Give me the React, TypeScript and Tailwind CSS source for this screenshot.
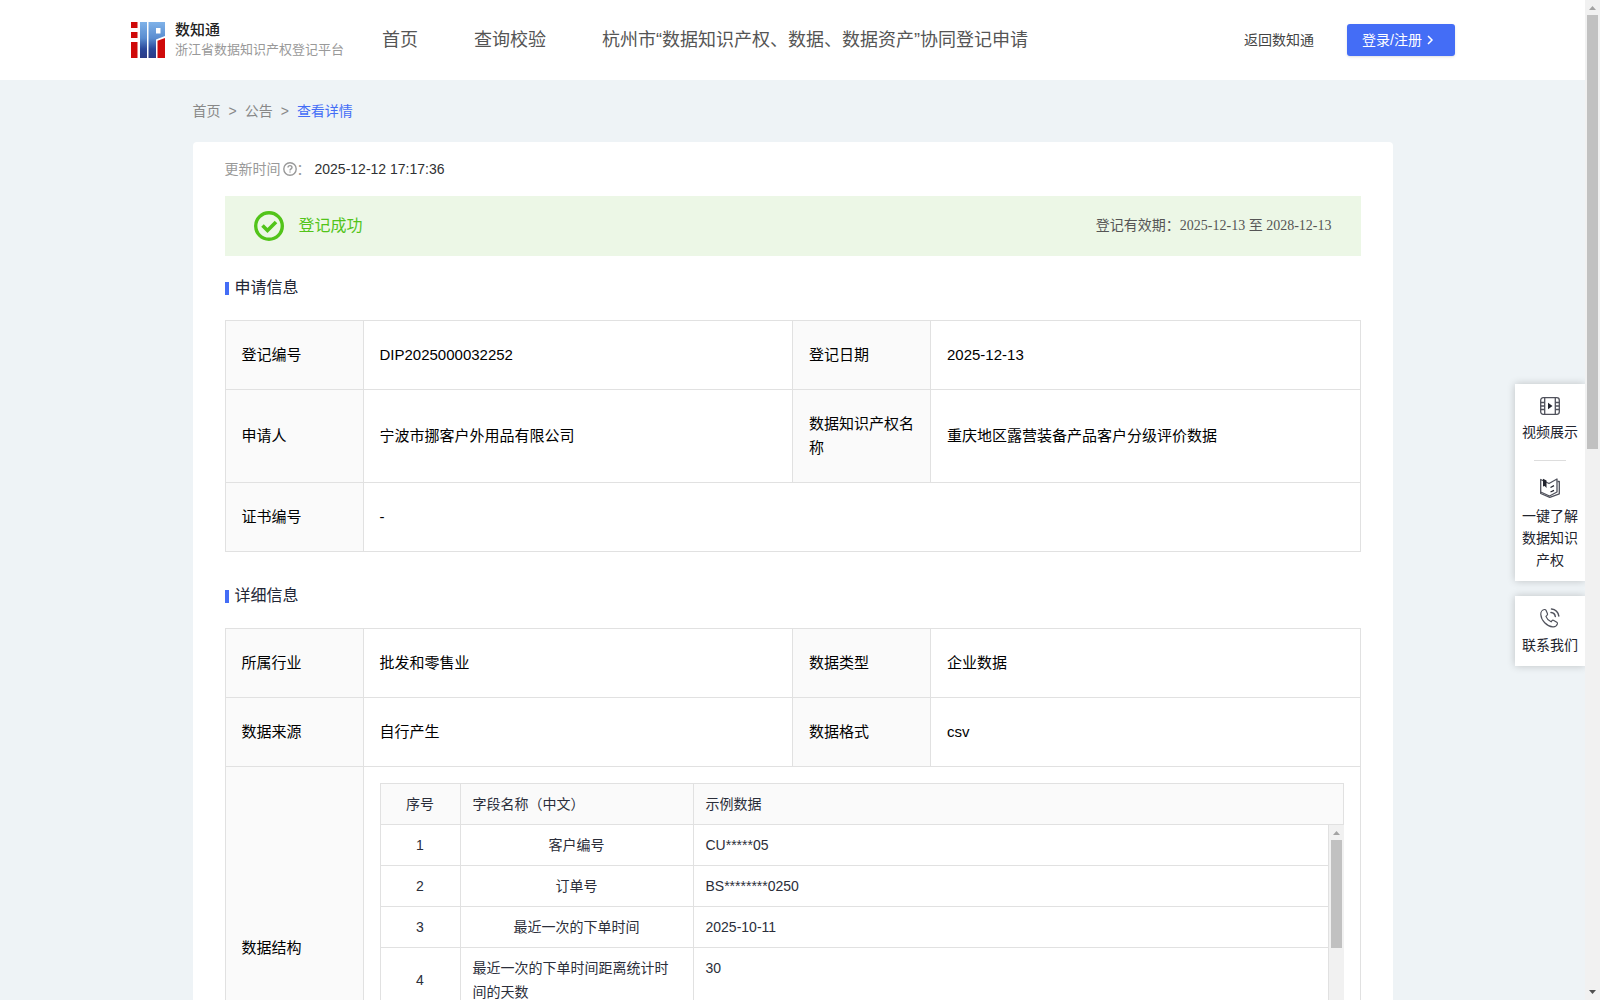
import type { ReactNode } from "react"

type Cell = { label: string; value: ReactNode }

const applyRows: Cell[][] = [
  [
    { label: "登记编号", value: "DIP2025000032252" },
    { label: "登记日期", value: "2025-12-13" },
  ],
  [
    { label: "申请人", value: "宁波市挪客户外用品有限公司" },
    { label: "数据知识产权名称", value: "重庆地区露营装备产品客户分级评价数据" },
  ],
  [{ label: "证书编号", value: "-" }],
]

const fields = [
  { name: "客户编号", sample: "CU*****05" },
  { name: "订单号", sample: "BS********0250" },
  { name: "最近一次的下单时间", sample: "2025-10-11" },
  { name: "最近一次的下单时间距离统计时间的天数", sample: "30" },
]

const detailRows: Cell[][] = [
  [
    { label: "所属行业", value: "批发和零售业" },
    { label: "数据类型", value: "企业数据" },
  ],
  [
    { label: "数据来源", value: "自行产生" },
    { label: "数据格式", value: "csv" },
  ],
]

function Logo() {
  return (
    <svg width="34" height="36" viewBox="0 0 34 36" aria-hidden="true">
      <defs>
        <linearGradient id="logoBlue" gradientUnits="userSpaceOnUse" x1="0" y1="0" x2="0" y2="36">
          <stop offset="0" stopColor="#7fb2e8" />
          <stop offset="0.45" stopColor="#5a8dd0" />
          <stop offset="0.75" stopColor="#2a489a" />
          <stop offset="1" stopColor="#2b3a86" />
        </linearGradient>
      </defs>
      <g fill="#cf0a0a">
        <path d="M0 0h6.500v6H0zM0 10h6.500v6H0zM0 20h6.500v16H0z" />
        <path d="M26.500 18.800L34 16v20h-7.500z" />
      </g>
      <path
        fill="url(#logoBlue)"
        fillRule="evenodd"
        d="M9 0h7v36H9zM17.500 0H34v14l-9 3.500V36h-7.500zM25 6v5.500h4.500V6z"
      />
    </svg>
  )
}

function VideoIcon() {
  return (
    <svg width="20" height="18" viewBox="0 0 20 18" fill="none" stroke="#50525c" strokeWidth="1.300" aria-hidden="true">
      <rect x="0.700" y="0.700" width="18.600" height="16.600" rx="2.500" />
      <path d="M4.700 0.600v16.800M15.300 0.600v16.800M0.600 5.500h4M0.600 9h4M0.600 12.500h4M15.300 5.500h4M15.300 9h4M15.300 12.500h4" />
      <path d="M8 5.800l4.500 3.200L8 12.200z" fill="#22242e" stroke="none" />
    </svg>
  )
}

function BookIcon() {
  return (
    <svg width="20" height="20" viewBox="0 0 20 20" fill="none" stroke="#50525c" strokeWidth="1.300" strokeLinejoin="round" aria-hidden="true">
      <path d="M0.700 1.500L9 5.500 17 1v13L9.500 18 0.700 14z" />
      <path d="M17.500 3.500h1.800v12.300L9.800 19.300 0.700 15.500V14" />
      <path d="M10.500 9.500L14 7.700M10.500 14L14 12.300" stroke="#22242e" />
      <path d="M3 0.800l3.500 1.800v7.400L4.700 8 3 8.500z" fill="#22242e" stroke="none" />
    </svg>
  )
}

function PhoneIcon() {
  return (
    <svg width="20" height="20" viewBox="0 0 20 20" fill="none" stroke="#50525c" strokeWidth="1.200" strokeLinejoin="round" strokeLinecap="round" aria-hidden="true">
      <path d="M4.500 1.500C2.500 1.800.6 3.800.8 6.500c.4 6 6 11.800 12 12.400 2.200.2 4-1.200 4.600-3 .2-.7 0-1.200-.6-1.600l-3-1.900c-.7-.4-1.300-.3-1.800.3l-.9 1.100c-2.400-1-4.300-3-5.200-5.400l1.100-1c.6-.5.7-1.100.4-1.800L6 2.300c-.3-.6-.8-.9-1.500-.8z" />
      <path d="M11 4.500c2.300.2 4 1.800 4.300 4M11.500 1c3.900.3 7 3.200 7.300 7" strokeWidth="1.500" />
    </svg>
  )
}

function Header() {
  return (
    <header className="flex h-20 shrink-0 items-center justify-between bg-white px-[130px]">
      <div className="flex items-center">
        <a href="#" className="flex w-[252px] items-center gap-[10px] pl-px">
          <Logo />
          <span className="flex flex-col">
            <span className="text-[15px] leading-5 font-medium text-[#222]">数知通</span>
            <span className="text-[13px] leading-5 whitespace-nowrap text-[#999]">浙江省数据知识产权登记平台</span>
          </span>
        </a>
        <nav className="flex gap-14 text-lg leading-6 whitespace-nowrap text-[#555]">
          <a href="#">首页</a>
          <a href="#">查询校验</a>
          <a href="#">杭州市“数据知识产权、数据、数据资产”协同登记申请</a>
        </nav>
      </div>
      <div className="flex items-center gap-[33px] text-sm whitespace-nowrap">
        <a href="#" className="text-[#444]">返回数知通</a>
        <button className="flex h-8 w-[108px] items-center gap-1 rounded-[3px] bg-[#446df6] px-[15px] text-white shadow-sm">
          登录/注册
          <svg width="8" height="10" viewBox="0 0 8 10" fill="none" stroke="#fff" strokeWidth="1.500" aria-hidden="true">
            <path d="M2 1l4 4-4 4" />
          </svg>
        </button>
      </div>
    </header>
  )
}

function SectionTitle({ children }: { children: ReactNode }) {
  return (
    <h2 className="flex items-center gap-[6px] text-base leading-6 text-[#222636]">
      <span className="h-[13px] w-1 bg-[#446df6]" />
      {children}
    </h2>
  )
}

function InfoTable({ rows, children }: { rows: Cell[][]; children?: ReactNode }) {
  return (
    <table className="w-full table-fixed border-collapse text-[15px] leading-6 text-black">
      <colgroup>
        <col className="w-[138px]" />
        <col />
        <col className="w-[138px]" />
        <col />
      </colgroup>
      <tbody>
        {rows.map((row) => (
          <tr key={row[0].label}>
            {row.map((cell) => (
              <InfoCell key={cell.label} cell={cell} span={row.length === 1 ? 3 : 1} />
            ))}
          </tr>
        ))}
        {children}
      </tbody>
    </table>
  )
}

function InfoCell({ cell, span }: { cell: Cell; span: number }) {
  return (
    <>
      <th scope="row" className="border border-[#e1e1e1] bg-[#fafafa] py-[22px] pr-3 pl-4 text-left font-normal">
        {cell.label}
      </th>
      <td colSpan={span} className="border border-[#e1e1e1] px-4 py-[22px]">
        {cell.value}
      </td>
    </>
  )
}

function FieldCols() {
  return (
    <colgroup>
      <col className="w-20" />
      <col className="w-[233px]" />
      <col />
    </colgroup>
  )
}

function StructureTable() {
  return (
    <div className="text-sm leading-6 text-[#2b2e3a]">
      <table className="w-full table-fixed border-collapse leading-6">
        <FieldCols />
        <thead>
          <tr className="bg-[#fafafa]">
            <th className="border border-[#e1e1e1] px-3 py-2 font-normal">序号</th>
            <th className="border border-[#e1e1e1] px-3 py-2 text-left font-normal">字段名称（中文）</th>
            <th className="border border-[#e1e1e1] px-3 py-2 text-left font-normal">示例数据</th>
          </tr>
        </thead>
      </table>
      <div className="flex h-[288px] overflow-hidden">
        <div className="flex-1">
          <table className="w-full table-fixed border-collapse leading-6">
            <FieldCols />
            <tbody>
              {fields.map((field, i) => (
                <tr key={field.name}>
                  <td className="border border-t-0 border-[#e1e1e1] px-3 py-2 text-center">{i + 1}</td>
                  <td className="border border-t-0 border-[#e1e1e1] px-3 py-2 text-center">
                    <span className="inline-block text-left align-top">{field.name}</span>
                  </td>
                  <td className="border border-t-0 border-[#e1e1e1] px-3 py-2 align-top">{field.sample}</td>
                </tr>
              ))}
            </tbody>
          </table>
        </div>
        <div className="flex w-[15px] flex-col items-center bg-[#f1f1f1]">
          <Arrow className="text-[#a3a3a3]" />
          <div className="h-[108px] w-[11px] bg-[#c1c1c1]" />
        </div>
      </div>
    </div>
  )
}

function Arrow({ className, down }: { className: string; down?: boolean }) {
  return (
    <svg width="15" height="15" viewBox="0 0 15 15" fill="currentColor" className={className} aria-hidden="true">
      <path d={down ? "M4 5h7l-3.500 4z" : "M4 10h7l-3.500-4z"} />
    </svg>
  )
}

function SideBar() {
  return (
    <aside className="absolute top-96 right-0 flex w-[70px] flex-col gap-[15px] text-center text-sm leading-[22px] text-[#22242e]">
      <div className="flex flex-col items-center bg-white pb-[10px] shadow-[0_0_8px_rgba(0,0,0,0.2)]">
        <a href="#" className="flex w-full flex-col items-center gap-[6px] px-[6px] pt-[13px] pb-[17px]">
          <VideoIcon />
          视频展示
        </a>
        <span className="h-px w-8 bg-[#ddd]" />
        <a href="#" className="flex w-full flex-col items-center gap-[7px] px-[6px] pt-[17px]">
          <BookIcon />
          一键了解数据知识产权
        </a>
      </div>
      <a href="#" className="flex h-[70px] flex-col items-center gap-[6px] bg-white pt-3 shadow-[0_0_8px_rgba(0,0,0,0.2)]">
        <PhoneIcon />
        联系我们
      </a>
    </aside>
  )
}

export default function App() {
  return (
    <div className="flex h-screen overflow-hidden bg-[#eef3f6] font-['Liberation_Sans','Noto_Sans_CJK_SC',sans-serif]">
      <div className="relative flex flex-1 flex-col overflow-hidden">
        <Header />
        <main className="mx-auto w-full max-w-[1200px]">
          <nav className="flex gap-2 py-5 text-sm leading-[22px] text-[#888]">
            <a href="#">首页</a>
            <span>&gt;</span>
            <a href="#">公告</a>
            <span>&gt;</span>
            <a href="#" className="text-[#446df6]">查看详情</a>
          </nav>
          <div className="rounded bg-white px-8 pt-4 pb-8">
            <div className="flex items-center text-sm leading-[22px] text-[#999]">
              更新时间
              <svg width="14" height="14" viewBox="0 0 14 14" fill="none" stroke="currentColor" strokeWidth="1.400" className="ml-[2px]" aria-hidden="true">
                <circle cx="7" cy="7" r="6.200" />
                <path d="M5 5.600c0-2.600 4-2.600 4 0C9 6.800 7 7 7 8.500M7 9.400v1.200" />
              </svg>
              ：
              <span className="ml-1 text-[#303133]">2025-12-12 17:17:36</span>
            </div>
            <div className="mt-4 flex h-[60px] items-center justify-between bg-[#ecf7e6] px-[29px]">
              <div className="flex items-center gap-[15px] text-base text-[#52c41a]">
                <svg width="30" height="30" viewBox="0 0 30 30" fill="none" stroke="#52c41a" aria-hidden="true">
                  <circle cx="15" cy="15" r="13.300" strokeWidth="3.400" />
                  <path d="M8.500 14.500l5 5L22 11" strokeWidth="3.600" />
                </svg>
                登记成功
              </div>
              <p className="font-['Liberation_Serif','Noto_Sans_CJK_SC',serif] text-sm text-[#555]">
                登记有效期：2025-12-13 至 2028-12-13
              </p>
            </div>

            <div className="mt-5 mb-5">
              <SectionTitle>申请信息</SectionTitle>
            </div>
            <InfoTable rows={applyRows} />

            <div className="mt-8 mb-5">
              <SectionTitle>详细信息</SectionTitle>
            </div>
            <InfoTable rows={detailRows}>
              <tr>
                <th scope="row" className="border border-[#e1e1e1] bg-[#fafafa] py-4 pr-3 pl-4 text-left font-normal">
                  数据结构
                </th>
                <td colSpan={3} className="border border-[#e1e1e1] p-4">
                  <StructureTable />
                </td>
              </tr>
            </InfoTable>
          </div>
        </main>
        <SideBar />
      </div>
      <div className="flex w-[15px] shrink-0 flex-col items-center bg-[#f1f1f1]">
        <Arrow className="text-[#a3a3a3]" />
        <div className="h-[434px] w-[11px] bg-[#c1c1c1]" />
        <div className="flex-1" />
        <Arrow className="text-[#505050]" down />
      </div>
    </div>
  )
}
